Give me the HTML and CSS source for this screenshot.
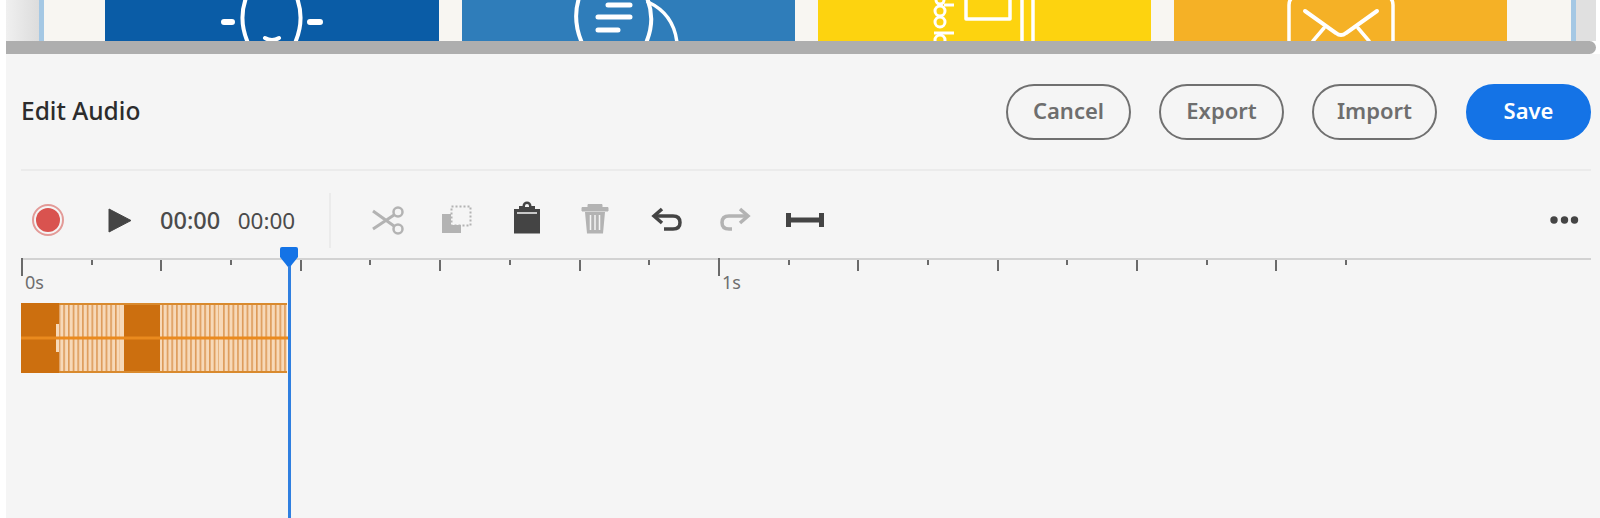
FILE: index.html
```html
<!DOCTYPE html>
<html lang="en">
<head>
  <meta charset="UTF-8">
  <meta name="viewport" content="width=device-width, initial-scale=1.0">
  <title>Edit Audio</title>
  <link rel="stylesheet" href="styles.css">
</head>
<body>

<div class="preview">
  <div class="preview-edge"></div>
  <div class="preview-inner">
    <div class="tile tile-blue">
      <svg width="334" height="41" viewBox="0 0 334 41" fill="none" stroke="#fff" stroke-width="4" stroke-linecap="round">
        <path d="M141 -2Q133 20 143 43M192 -2Q200 20 190 43"/>
        <path d="M119 22H127M205 22H215" stroke-width="6"/>
        <path d="M160 38Q167 42 174 38" stroke-width="4"/>
      </svg>
    </div>
    <div class="tile tile-sky">
      <svg width="333" height="41" viewBox="0 0 333 41" fill="none" stroke="#fff" stroke-width="4" stroke-linecap="round">
        <path d="M117 -2Q110 20 120 43M185 -2Q194 20 184 43"/>
        <path d="M186 2Q212 14 215 43" stroke-width="3.5"/>
        <path d="M146 5H168M136 17H168M136 30H156" stroke-width="5"/>
      </svg>
    </div>
    <div class="tile tile-yellow">
      <svg width="333" height="41" viewBox="0 0 333 41" fill="none" stroke="#fff" stroke-width="3.5">
        <path d="M148 -2V19H192V-2" stroke-linejoin="round"/>
        <path d="M204 0V41M215 0V41"/>
        <circle cx="122" cy="0" r="4" stroke-width="3"/>
        <ellipse cx="122" cy="11" rx="5" ry="5" stroke-width="3"/>
        <ellipse cx="122" cy="22" rx="5" ry="5" stroke-width="3"/>
        <circle cx="122" cy="40" r="5" stroke-width="3"/>
        <path d="M126 5H136M116 33H136" stroke-width="3"/>
      </svg>
    </div>
    <div class="tile tile-orange">
      <svg width="333" height="41" viewBox="0 0 333 41" fill="none" stroke="#fff" stroke-width="3.5" stroke-linecap="round">
        <path d="M115 41V5Q115 0 118 -2M219 41V5Q219 0 216 -2"/>
        <path d="M131 11L162 33Q167 37 172 33L203 11" stroke-width="4"/>
        <path d="M150 28L139 41M184 28L195 41"/>
      </svg>
    </div>
  </div>
  <div class="preview-gutter"></div>
</div>
<div class="scrollbar"></div>

<div class="panel">
  <div class="panel-header">
    <h1 class="panel-title">Edit Audio</h1>
    <div class="actions">
      <button class="btn">Cancel</button>
      <button class="btn">Export</button>
      <button class="btn">Import</button>
      <button class="btn btn-save">Save</button>
    </div>
  </div>

  <div class="toolbar">
    <div class="record"><span class="record-dot"></span></div>
    <svg class="play" width="24" height="25" viewBox="0 0 24 25"><path d="M1 1L23 12.5L1 24Z" fill="#444" stroke="#444" stroke-linejoin="round"/></svg>
    <span class="time time-current">00:00</span>
    <span class="time">00:00</span>
    <span class="toolbar-sep"></span>

    <div class="tools">
      <div class="tool">
        <svg width="40" height="40" viewBox="0 0 40 40" fill="none" stroke="#b3b3b3" stroke-width="3">
          <circle cx="30" cy="12" r="4.5" stroke-width="2.5"/>
          <circle cx="30" cy="29" r="4.5" stroke-width="2.5"/>
          <path d="M5 11L26 26M5 29L26 15"/>
        </svg>
      </div>
      <div class="tool">
        <svg width="40" height="40" viewBox="0 0 40 40" fill="none">
          <rect x="14.5" y="6.5" width="19" height="19" stroke="#b3b3b3" stroke-width="2" stroke-dasharray="2 2"/>
          <path d="M5 14H14V25H24V33H5Z" fill="#b3b3b3"/>
        </svg>
      </div>
      <div class="tool">
        <svg width="40" height="40" viewBox="0 0 40 40">
          <path d="M7 9H12V6H15.5A4.5 4.5 0 0 1 24.5 6H28V9H33V33.500H7Z" fill="#444"/>
          <path d="M18 6A2 2 0 0 1 22 6V7H18Z" fill="#f5f5f5"/>
          <path d="M10 13H30" stroke="#f5f5f5" stroke-width="1.500"/>
        </svg>
      </div>
      <div class="tool">
        <svg width="40" height="40" viewBox="0 0 40 40" fill="none">
          <path d="M6 7.500H32V11H6ZM12 7.500V4.500H26V7.500" fill="#b3b3b3" stroke="#b3b3b3"/>
          <path d="M9 12H29L27 33.500H11Z" fill="#b3b3b3"/>
          <path d="M14.500 15V30M19 15V30M23.500 15V30" stroke="#f5f5f5" stroke-width="1.500"/>
        </svg>
      </div>
      <div class="tool">
        <svg width="40" height="40" viewBox="0 0 40 40" fill="none" stroke="#444" stroke-width="3.500">
          <path d="M16 9L8 16L16 23"/>
          <path d="M8 16H27Q34 16 34 22.500Q34 29 27 29H18"/>
        </svg>
      </div>
      <div class="tool">
        <svg width="40" height="40" viewBox="0 0 40 40" fill="none" stroke="#b3b3b3" stroke-width="3.500">
          <path d="M25 9L33 16L25 23"/>
          <path d="M33 16H14Q7 16 7 22.500Q7 29 14 29H17"/>
        </svg>
      </div>
      <div class="tool">
        <svg width="40" height="40" viewBox="0 0 40 40" fill="#444">
          <rect x="1" y="13" width="5" height="14"/>
          <rect x="1" y="17.500" width="38" height="5"/>
          <rect x="34" y="13" width="5" height="14"/>
        </svg>
      </div>
    </div>

    <svg class="more" width="30" height="10" viewBox="0 0 30 10" fill="#444">
      <circle cx="5" cy="5" r="3.700"/><circle cx="15.500" cy="5" r="3.700"/><circle cx="25.500" cy="5" r="3.700"/>
    </svg>
  </div>

  <div class="ruler">
    <div class="cell"><span class="tick tick-label"></span><span class="ruler-text">0s</span></div>
    <div class="cell"><span class="tick tick-minor"></span></div>
    <div class="cell"><span class="tick"></span></div>
    <div class="cell"><span class="tick tick-minor"></span></div>
    <div class="cell"><span class="tick"></span></div>
    <div class="cell"><span class="tick tick-minor"></span></div>
    <div class="cell"><span class="tick"></span></div>
    <div class="cell"><span class="tick tick-minor"></span></div>
    <div class="cell"><span class="tick"></span></div>
    <div class="cell"><span class="tick tick-minor"></span></div>
    <div class="cell"><span class="tick tick-label"></span><span class="ruler-text">1s</span></div>
    <div class="cell"><span class="tick tick-minor"></span></div>
    <div class="cell"><span class="tick"></span></div>
    <div class="cell"><span class="tick tick-minor"></span></div>
    <div class="cell"><span class="tick"></span></div>
    <div class="cell"><span class="tick tick-minor"></span></div>
    <div class="cell"><span class="tick"></span></div>
    <div class="cell"><span class="tick tick-minor"></span></div>
    <div class="cell"><span class="tick"></span></div>
    <div class="cell"><span class="tick tick-minor"></span></div>
  </div>

  <svg class="waveform" width="268" height="70" viewBox="0 0 268 70">
    <defs>
      <pattern id="stripes" width="4.7" height="70" patternUnits="userSpaceOnUse">
        <rect width="4.7" height="70" fill="#f7d9b8"/>
        <rect width="1.6" height="70" fill="#dd9a58"/>
      </pattern>
    </defs>
    <rect x="38" width="62" height="70" fill="url(#stripes)"/>
    <rect x="138" width="128" height="70" fill="url(#stripes)"/>
    <rect width="38" height="70" fill="#cc6f0f"/>
    <rect x="103" width="36" height="70" fill="#cc6f0f"/>
    <rect x="35" y="21" width="3" height="28" fill="#f7d9b8"/>
    <rect x="99" width="4" height="70" fill="#f7d9b8"/>
    <rect x="198" width="2" height="70" fill="#f7d9b8"/>
    <rect x="38" width="228" height="2" fill="#d98a2e"/>
    <rect x="38" y="68" width="228" height="2" fill="#d98a2e"/>
    <rect y="33.500" width="268" height="3" fill="#ea8a1e"/>
  </svg>

  <div class="playhead">
    <svg width="18" height="21" viewBox="0 0 18 21"><path d="M2 0H16Q18 0 18 2V10L10 20H8L0 10V2Q0 0 2 0Z" fill="#1473e6"/></svg>
    <span class="playhead-line"></span>
  </div>
</div>

</body>
</html>
```

FILE: styles.css
```css
html, body {
  height: 100%;
}

body {
  margin: 0;
  padding-left: 6px;
  background-color: #fff;
  font-family: "Noto Sans", Arial, sans-serif;
  overflow: hidden;
}

.preview {
  display: flex;
  height: 41px;
  margin-right: 4px;
  background-color: #e0e0e0;
}

.preview-edge {
  width: 33px;
  background: linear-gradient(to right, #f0f0f0, #dcdcdc);
}

.preview-inner {
  display: flex;
  gap: 23px;
  width: 1537px;
  box-sizing: border-box;
  padding: 0 63px 0 61px;
  background-color: #f8f6f2;
  border-left: 5px solid #a5c8e4;
  border-right: 5px solid #a5c8e4;
  overflow: hidden;
}

.preview-gutter {
  flex: 1;
}

.tile {
  flex: 0 0 333px;
  height: 41px;
  overflow: hidden;
}

.tile svg {
  display: block;
}

.tile-blue { background-color: #0a5ca6; flex-basis: 334px; }
.tile-sky { background-color: #2f7dba; }
.tile-yellow { background-color: #fdd30f; }
.tile-orange { background-color: #f5b126; }

.scrollbar {
  height: 13px;
  margin-right: 4px;
  background-color: #aeaeae;
  border-radius: 0 7px 7px 0;
}

.panel {
  position: relative;
  height: 464px;
  padding: 0 9px 0 15px;
  background-color: #f5f5f5;
}

.panel-header {
  display: flex;
  align-items: center;
  justify-content: space-between;
  height: 117px;
  padding-top: 2px;
  box-sizing: border-box;
  border-bottom: 2px solid #ebebeb;
}

.panel-title {
  margin: 0 0 5px;
  font-size: 24.5px;
  font-weight: 500;
  color: #2c2c2c;
}

.actions {
  display: flex;
  gap: 28px;
  margin-bottom: 2px;
}

.btn {
  width: 125px;
  height: 56px;
  padding: 0 0 4px;
  background: transparent;
  border: 2.5px solid #707070;
  border-radius: 28px;
  font-family: inherit;
  font-size: 22px;
  font-weight: 600;
  color: #6e6e6e;
  cursor: pointer;
}

.btn-save {
  margin-left: 1px;
  background: #1473e6;
  border-color: #1473e6;
  color: #fff;
}

.toolbar {
  display: flex;
  align-items: center;
  height: 88px;
  padding: 10px 0 0 11px;
  box-sizing: border-box;
}

.record {
  display: flex;
  align-items: center;
  justify-content: center;
  width: 28px;
  height: 28px;
  border: 2px solid #e39a97;
  border-radius: 50%;
  margin-right: 44px;
}

.record-dot {
  width: 24px;
  height: 24px;
  border-radius: 50%;
  background-color: #d9534f;
}

.play {
  margin-right: 28px;
}

.time {
  font-size: 22.5px;
  color: #4b4b4b;
}

.time-current {
  font-size: 23.5px;
  font-weight: 500;
  margin-right: 17.5px;
}

.toolbar-sep {
  width: 2px;
  height: 55px;
  margin-left: 33.5px;
  background-color: #ebebeb;
}

.tools {
  display: flex;
  margin-left: 22.5px;
}

.tool {
  display: flex;
  justify-content: center;
  width: 69.5px;
}

.more {
  margin-left: auto;
  margin-right: 12px;
}

.ruler {
  display: flex;
  height: 45px;
  border-top: 2px solid #d2d2d2;
  margin-top: -1px;
  box-sizing: border-box;
}

.cell {
  display: flex;
  align-items: flex-start;
  flex: 0 0 69.7px;
}

.tick {
  width: 2px;
  height: 11px;
  background-color: #6a6a6a;
}

.tick-minor {
  height: 5px;
}

.tick-label {
  height: 18px;
  margin-top: -2px;
}

.ruler-text {
  margin: 10px 0 0 2px;
  font-size: 18px;
  color: #6e6e6e;
}

.waveform {
  display: block;
}

.playhead {
  position: absolute;
  top: 193px;
  left: 274px;
  bottom: 0;
  display: flex;
  flex-direction: column;
  align-items: center;
  width: 18px;
}

.playhead svg {
  display: block;
  flex: none;
}

.playhead-line {
  flex: 1;
  width: 3px;
  margin-top: -2px;
  background-color: #2f7fe0;
}
```
